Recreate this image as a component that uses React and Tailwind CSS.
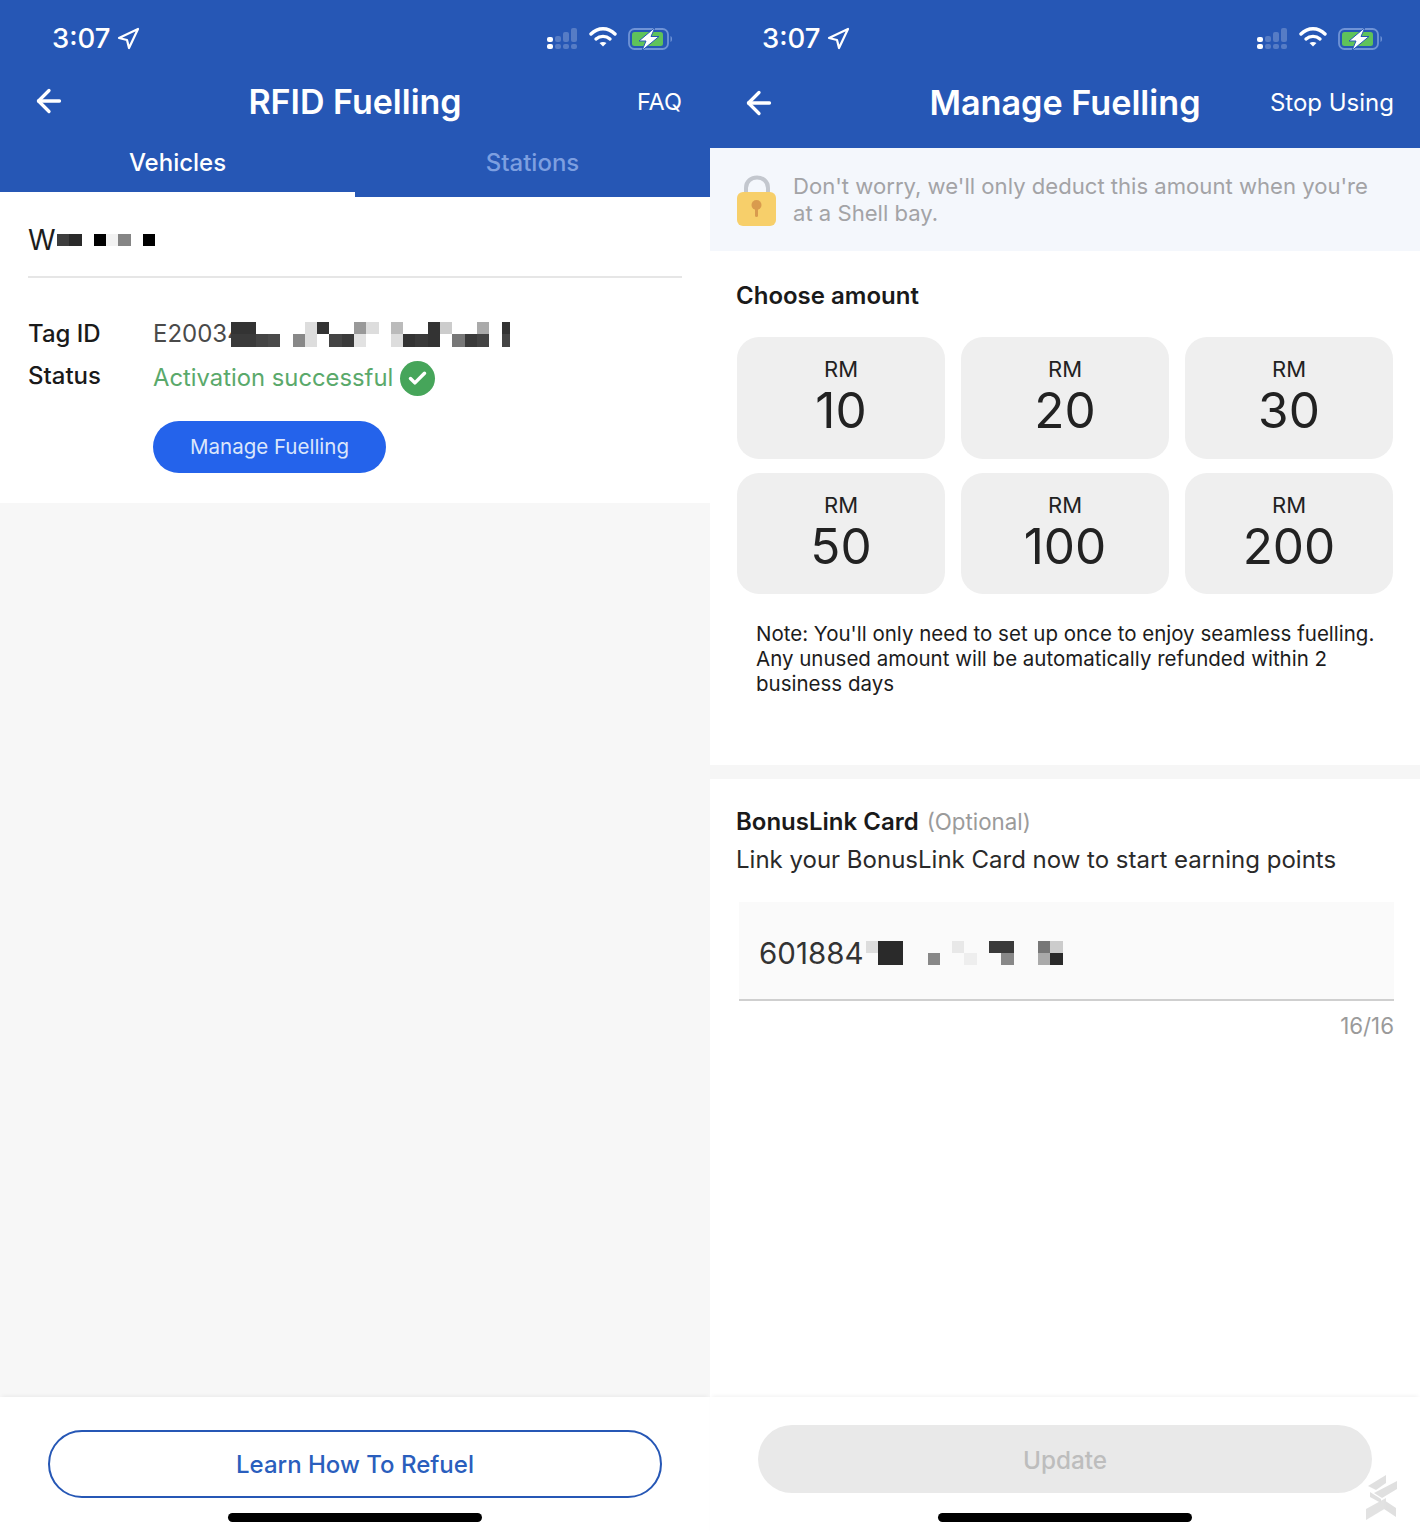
import { Navigation, ArrowLeft, Check } from 'lucide-react'

const AMOUNTS = [10, 20, 30, 50, 100, 200]

// censored blocks from the screenshot: [col, row, colour, width]
const NAME_CELLS = [[0, 0, '#3d3d3d'], [1, 0, '#2a2a2a'], [3, 0, '#000'], [4, 0, '#f2f2f2'], [5, 0, '#858585'], [7, 0, '#000']]
const TAG_CELLS = [
  [0, 0, '#333'], [1, 0, '#333'], [6, 0, '#ddd'], [7, 0, '#333'], [10, 0, '#999'], [11, 0, '#ddd'], [13, 0, '#bbb'],
  [16, 0, '#333'], [17, 0, '#ccc'], [20, 0, '#aaa'], [22, 0, '#333', 0.65],
  [0, 1, '#3a3a3a'], [1, 1, '#3a3a3a'], [2, 1, '#444'], [3, 1, '#4a4a4a'], [5, 1, '#888'], [6, 1, '#ddd'], [8, 1, '#444'],
  [9, 1, '#3a3a3a'], [10, 1, '#e2e2e2'], [13, 1, '#ddd'], [14, 1, '#333'], [15, 1, '#3a3a3a'], [16, 1, '#333'],
  [18, 1, '#777'], [19, 1, '#3a3a3a'], [20, 1, '#444'], [22, 1, '#444', 0.65],
]
const CARD_CELLS = [
  [0, 0, '#ddd'], [1, 0, '#2a2a2a'], [2, 0, '#2a2a2a'], [1, 1, '#2a2a2a'], [2, 1, '#2a2a2a'], [5, 1, '#888'],
  [7, 0, '#e8e8e8'], [8, 1, '#eee'], [10, 0, '#3a3a3a'], [11, 0, '#3a3a3a'], [11, 1, '#888'],
  [14, 0, '#777'], [15, 0, '#ccc'], [14, 1, '#aaa'], [15, 1, '#2a2a2a'],
]

function Mosaic({ cells, cols, rows, className }) {
  return (
    <svg viewBox={`0 0 ${cols} ${rows}`} width={cols * 12.3} height={rows * 12.3} className={className} shapeRendering="crispEdges">
      {cells.map(([x, y, c, w]) => (
        <rect key={`${x}-${y}`} x={x} y={y} width={w || 1} height="1" fill={c} />
      ))}
    </svg>
  )
}

function StatusBar() {
  return (
    <div className="flex h-[76px] items-center justify-between pl-[52px] pr-[36px] pt-[1px]">
      <div className="flex items-center gap-[6px] text-[27.5px] font-medium leading-none text-white">
        3:07
        <Navigation size={24} strokeWidth={2.2} className="-ml-[1px]" />
      </div>
      <div className="flex items-center">
        <svg width="31" height="22" viewBox="0 0 31 22" fill="#fff">
          <rect x="0" y="9" width="6" height="5" rx="2" />
          <rect x="0" y="16" width="6" height="5" rx="2" />
          <g fill="#fff" opacity="0.22">
            <rect x="8" y="16" width="6" height="5" rx="2" />
            <rect x="16" y="16" width="6" height="5" rx="2" />
            <rect x="24" y="16" width="6" height="5" rx="2" />
            <rect x="8" y="8" width="6" height="6" rx="2" />
            <rect x="16" y="4" width="6" height="10" rx="2" />
            <rect x="24" y="0" width="6" height="14" rx="2" />
          </g>
        </svg>
        <svg width="28" height="22" viewBox="0 0 28 22" className="mb-[3px] ml-[11px]" fill="none" stroke="#fff" strokeWidth="3.4" strokeLinecap="round">
          <path d="M2 8 C9 1 19 1 26 8" />
          <path d="M7 13 C11 9.5 17 9.5 21 13" />
          <path d="M14 20.5 L10.5 17 C12.5 15.5 15.5 15.5 17.5 17 Z" fill="#fff" stroke="none" />
        </svg>
        <svg width="46" height="24" viewBox="0 0 46 24" className="ml-[11px]">
          <rect x="1" y="2" width="39" height="20" rx="5.5" fill="none" stroke="#6f93d6" strokeWidth="1.8" />
          <rect x="4" y="5" width="31" height="14" rx="2.5" fill="#5fc25a" />
          <path d="M42.5 9 C44.5 9.5 44.5 14.5 42.5 15 Z" fill="#6f93d6" />
          <path d="M27 0.5 L11 14 L18 14 L14 23.5 L31 9.5 L23 9.5 Z" fill="#fff" stroke="#2657b5" strokeWidth="1" />
        </svg>
      </div>
    </div>
  )
}

function HomeBar() {
  return <div className="mx-auto h-[9px] w-[254px] rounded-full bg-black" />
}

function LeftScreen() {
  return (
    <div className="flex w-[710px] flex-col">
      <div className="bg-[#2657b5] text-white">
        <StatusBar />
        <div className="relative flex h-[50px] items-center justify-center">
          <ArrowLeft size={36} strokeWidth={2.2} className="absolute left-[31px]" />
          <span className="pt-[1px] text-[34px] font-semibold leading-none">RFID Fuelling</span>
          <span className="absolute right-[28px] pt-[2px] text-[23.5px]">FAQ</span>
        </div>
        <div className="flex h-[71px]">
          <div className="flex w-[355px] flex-col items-center border-b-[5px] border-white pt-[19px]">
            <span className="text-[24px] font-medium leading-[36px]">Vehicles</span>
          </div>
          <div className="flex w-[355px] flex-col items-center pt-[19px]">
            <span className="text-[24px] font-medium leading-[36px] text-[#7d9fe0]">Stations</span>
          </div>
        </div>
      </div>

      <div className="h-[306px] bg-white px-[28px]">
        <div className="flex h-[81px] items-center border-b-2 border-[#e6e6e6] pt-[6px] text-[28px] text-[#1d1d1d]">
          W<Mosaic cells={NAME_CELLS} cols={8} rows={1} className="ml-[1px] mt-[2px]" />
        </div>
        <div className="mt-[35px] flex h-[42px] items-start">
          <span className="w-[125px] text-[24px] font-medium leading-[42px] text-[#1a1a1a]">Tag ID</span>
          <div className="flex h-[42px] items-center">
            <span className="text-[24px] text-[#4a4a4a]">E20034</span>
            <Mosaic cells={TAG_CELLS} cols={23} rows={2} className="-ml-[12px] mt-[1px]" />
          </div>
        </div>
        <div className="flex h-[44px] items-start">
          <span className="w-[125px] text-[24px] font-medium leading-[42px] text-[#1a1a1a]">Status</span>
          <div className="flex h-[44px] items-center gap-[7px] pt-[2px]">
            <span className="text-[23.8px] text-[#5aa96b]">Activation successful</span>
            <span className="flex h-[35px] w-[35px] items-center justify-center rounded-full bg-[#46a55a]">
              <Check size={21} strokeWidth={4} color="#fff" />
            </span>
          </div>
        </div>
        <button className="ml-[125px] mt-[22px] h-[52px] w-[233px] rounded-full bg-[#2463eb] text-[20.5px] text-[#dbe6fb]">Manage Fuelling</button>
      </div>

      <div className="h-[894px] bg-[#f7f7f7]" />

      <div className="flex h-[139px] flex-col bg-white px-[48px] pt-[33px] shadow-[0_-3px_4px_-2px_rgba(0,0,0,0.06)]">
        <button className="h-[68px] w-[614px] rounded-full border-2 border-[#2657b5] pt-[2px] text-[24px] font-medium text-[#2a5ebd]">Learn How To Refuel</button>
        <div className="mt-[15px]">
          <HomeBar />
        </div>
      </div>
    </div>
  )
}

function RightScreen() {
  return (
    <div className="relative flex w-[710px] flex-col">
      <div className="h-[148px] bg-[#2657b5] text-white">
        <StatusBar />
        <div className="relative flex h-[54px] items-center justify-center">
          <ArrowLeft size={36} strokeWidth={2.2} className="absolute left-[31px]" />
          <span className="pt-[1px] text-[34.2px] font-semibold leading-none">Manage Fuelling</span>
          <span className="absolute right-[26px] text-[24px]">Stop Using</span>
        </div>
      </div>

      <div className="flex h-[103px] items-center gap-[16px] bg-[#f4f7fc] pl-[27px]">
        <svg width="40" height="54" viewBox="0 0 40 54" className="mt-[3px]">
          <path d="M9 26 V14 C9 0 31 0 31 14 V26" fill="none" stroke="#c3c7ce" strokeWidth="4" />
          <rect x="0" y="18" width="39" height="34" rx="6" fill="#f7cf6a" />
          <circle cx="19.5" cy="31" r="5" fill="#d99b4e" />
          <rect x="18" y="32" width="3" height="11" rx="1.5" fill="#d99b4e" />
        </svg>
        <p className="text-[22.1px] leading-[27px] text-[#a3a3a6]">
          Don't worry, we'll only deduct this amount when you're
          <br />
          at a Shell bay.
        </p>
      </div>

      <div className="h-[514px] bg-white pl-[26px] pr-[27px]">
        <h2 className="pt-[30px] text-[24px] font-semibold leading-[30px] text-[#1a1a1a]">Choose amount</h2>
        <div className="ml-[1px] mt-[26px] grid grid-cols-3 gap-x-[16px] gap-y-[14px]">
          {AMOUNTS.map((a) => (
            <div key={a} className="flex h-[121.5px] flex-col items-center rounded-[22px] bg-[#efefef] pt-[19px] text-[#222]">
              <span className="text-[22px] leading-[26px]">RM</span>
              <span className="mt-[1px] text-[49.5px] leading-[54px]">{a}</span>
            </div>
          ))}
        </div>
        <p className="ml-[20px] mt-[27px] whitespace-nowrap text-[20.5px] leading-[25px] text-[#1c1c1c]">
          Note: You'll only need to set up once to enjoy seamless fuelling.
          <br />
          Any unused amount will be automatically refunded within 2
          <br />
          business days
        </p>
      </div>

      <div className="h-[14px] bg-[#f6f6f6]" />

      <div className="h-[618px] bg-white pl-[26px] pr-[26px] pt-[26px]">
        <div className="flex items-baseline gap-[8px]">
          <span className="text-[24px] font-semibold leading-[30px] text-[#1a1a1a]">BonusLink Card</span>
          <span className="text-[22.3px] text-[#9b9b9b]">(Optional)</span>
        </div>
        <p className="mt-[7px] text-[24px] leading-[30px] text-[#2a2a2a]">Link your BonusLink Card now to start earning points</p>
        <div className="ml-[3px] mt-[27px] flex h-[99px] items-center border-b-2 border-[#cfcfcf] bg-[#fafafa] pl-[20px] pt-[4px] text-[29.5px] text-[#333]">
          601884
          <Mosaic cells={CARD_CELLS} cols={16} rows={2} className="ml-[3px]" />
        </div>
        <p className="mt-[12px] text-right text-[22.3px] leading-[26px] text-[#9a9a9a]">16/16</p>
      </div>

      <div className="flex h-[139px] flex-col bg-white px-[48px] pt-[28px] shadow-[0_-3px_4px_-2px_rgba(0,0,0,0.06)]">
        <button className="h-[68px] w-[614px] rounded-full bg-[#e9e9e9] pt-[3px] text-[24.3px] font-medium text-[#bdbdbd]">Update</button>
        <div className="mt-[20px]">
          <HomeBar />
        </div>
      </div>

      <svg width="32" height="48" viewBox="0 0 32 48" className="absolute right-[22px] top-[1472px]" fill="#e0e0e0">
        <path d="M2 14 L20 3 L20 11 L10 18 Z" />
        <path d="M31 9 L31 17 L16 26 L8 21 Z" />
        <path d="M4 20 L15 27 L15 31 L4 25 Z" />
        <path d="M18 28 L30 36 L30 45 L18 37 Z" />
        <path d="M0 37 L20 26 L20 36 L0 48 Z" opacity="0.95" />
      </svg>
    </div>
  )
}

export default function App() {
  return (
    <div className="flex h-[1536px] w-[1420px] overflow-hidden bg-white font-[Inter,sans-serif]">
      <LeftScreen />
      <RightScreen />
    </div>
  )
}
